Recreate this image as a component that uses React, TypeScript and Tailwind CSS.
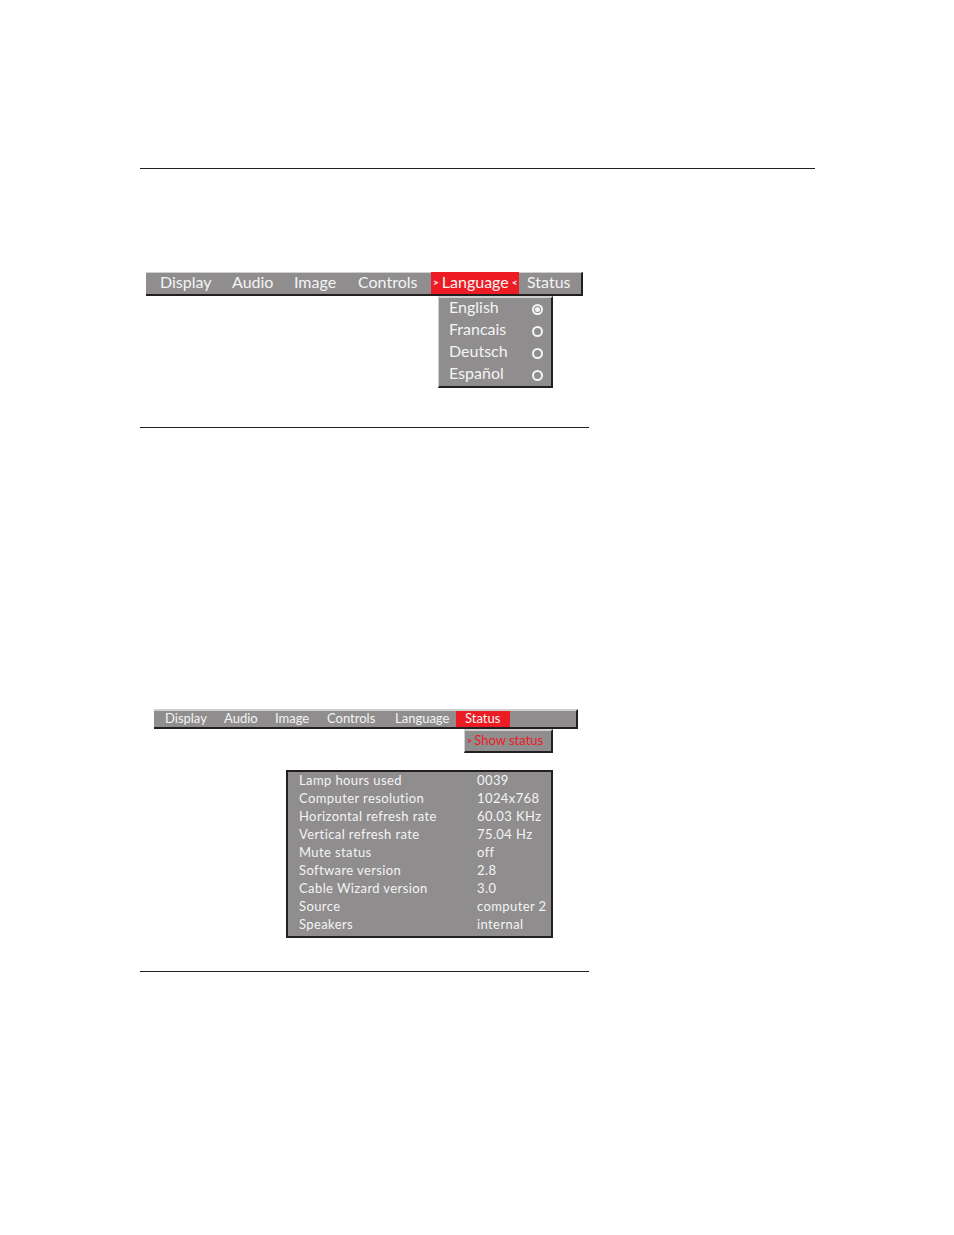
const font = { fontFamily: '"Lato", "Open Sans", sans-serif' };

const topItems = [
  { label: 'Display', w: 'w-[72px]' },
  { label: 'Audio', w: 'w-[62px]' },
  { label: 'Image', w: 'w-[64px]' },
  { label: 'Controls', w: 'w-[73px]' },
];

const languages = [
  { label: 'English', selected: true },
  { label: 'Francais', selected: false },
  { label: 'Deutsch', selected: false },
  { label: 'Español', selected: false },
];

const statusItems = [
  { label: 'Display', w: 'w-[59px]' },
  { label: 'Audio', w: 'w-[51px]' },
  { label: 'Image', w: 'w-[52px]' },
  { label: 'Controls', w: 'w-[68px]' },
  { label: 'Language', w: 'w-[61px]' },
];

const statusRows = [
  ['Lamp hours used', '0039'],
  ['Computer resolution', '1024x768'],
  ['Horizontal refresh rate', '60.03 KHz'],
  ['Vertical refresh rate', '75.04 Hz'],
  ['Mute status', 'off'],
  ['Software version', '2.8'],
  ['Cable Wizard version', '3.0'],
  ['Source', 'computer 2'],
  ['Speakers', 'internal'],
];

const Radio = ({ on }: { on: boolean }) => (
  <span className="flex h-[11px] w-[11px] items-center justify-center rounded-full border-2 border-[#f4f4f4]">
    {on && <span className="h-[5px] w-[5px] rounded-full bg-[#f4f4f4]" />}
  </span>
);

export default function App() {
  return (
    <div className="flex min-h-[1235px] w-[954px] flex-col bg-white text-[#f4f4f4]" style={font}>
      <div className="ml-[140px] mt-[168px] h-px w-[675px] bg-[#231f20]" />

      {/* language menu */}
      <div className="ml-[146px] mt-[103px] flex h-[24px] w-[437px] border-t border-r-2 border-b-2 border-t-[#cfcfcf] border-r-[#231f20] border-b-[#231f20] bg-[#8f8d8e] text-[16px] leading-none">
        <div className="w-[14px]" />
        {topItems.map((it) => (
          <div key={it.label} className={`${it.w} flex items-center pb-[4px]`}>
            {it.label}
          </div>
        ))}
        <div className="-mt-px flex w-[88px] items-center bg-[#ed1c24] pb-[3px] pl-[2px]">
          <span className="text-[10px] font-black">&gt;</span>
          <span className="ml-[3px]">Language</span>
          <span className="ml-[3px] text-[10px] font-black">&lt;</span>
        </div>
        <div className="flex items-center pb-[4px] pl-[8px]">Status</div>
      </div>
      <div className="ml-[438px] flex w-[115px] flex-col border-t-2 border-l border-r-2 border-b-2 border-t-[#cfcfcf] border-l-[#cfcfcf] border-r-[#231f20] border-b-[#231f20] bg-[#8f8d8e] text-[16px] leading-none">
        {languages.map((l) => (
          <div key={l.label} className="flex h-[22px] items-center justify-between pl-[10px] pr-[8px]">
            <span className="mb-[4px]">{l.label}</span>
            <Radio on={l.selected} />
          </div>
        ))}
      </div>

      <div className="ml-[140px] mt-[39px] h-px w-[449px] bg-[#231f20]" />

      {/* status menu */}
      <div className="ml-[154px] mt-[281px] flex h-[20px] w-[424px] border-t-2 border-r-2 border-b-2 border-t-[#cfcfcf] border-r-[#231f20] border-b-[#231f20] bg-[#8f8d8e] text-[13px] leading-none">
        <div className="w-[11px]" />
        {statusItems.map((it) => (
          <div key={it.label} className={`${it.w} flex items-center pb-[2px]`}>
            {it.label}
          </div>
        ))}
        <div className="flex w-[54px] items-center bg-[#ed1c24] pb-[2px] pl-[9px]">Status</div>
      </div>
      <div className="ml-[464px] flex h-[24px] w-[89px] items-center border-t-2 border-l border-r-2 border-b-2 border-t-[#cfcfcf] border-l-[#cfcfcf] border-r-[#231f20] border-b-[#231f20] bg-[#8f8d8e] pb-[2px] pl-[2px] text-[13px] leading-none text-[#ed1c24]">
        <span className="text-[9px] font-black">&gt;</span>
        <span className="ml-[2px]">Show status</span>
      </div>

      <div className="ml-[286px] mt-[17px] flex w-[267px] flex-col border-2 border-[#231f20] bg-[#8f8d8e] pb-[2px] text-[13px] leading-none tracking-[0.4px]">
        {statusRows.map(([k, v]) => (
          <div key={k} className="flex h-[18px] items-center pb-[2px]">
            <span className="w-[189px] pl-[11px]">{k}</span>
            <span>{v}</span>
          </div>
        ))}
      </div>

      <div className="ml-[140px] mt-[33px] h-px w-[449px] bg-[#231f20]" />
    </div>
  );
}
